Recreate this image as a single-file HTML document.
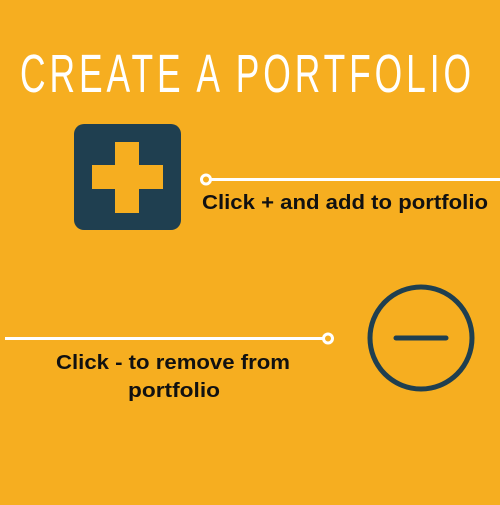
<!DOCTYPE html>
<html><head><style>
html,body{margin:0;padding:0;}
body{width:500px;height:500px;background:#F6AE20;overflow:hidden;}
</style></head><body>
<svg width="500" height="500" viewBox="0 0 500 500" xmlns="http://www.w3.org/2000/svg">
<rect width="500" height="500" fill="#F6AE20"/>
<text x="20" y="92" font-family="Liberation Sans, sans-serif" font-size="54" fill="#fff" textLength="455" lengthAdjust="spacingAndGlyphs" transform="translate(0,0)" style="letter-spacing:6px">CREATE A PORTFOLIO</text>
<rect x="74" y="124" width="107" height="106" rx="10" fill="#1F3F50"/>
<rect x="92" y="165" width="71" height="24" fill="#F6AE20"/>
<rect x="115" y="142" width="24" height="71" fill="#F6AE20"/>
<line x1="211" y1="179.5" x2="500" y2="179.5" stroke="#fff" stroke-width="3"/>
<circle cx="206" cy="179.5" r="4.5" fill="none" stroke="#fff" stroke-width="3"/>
<text x="202" y="209" font-family="Liberation Sans, sans-serif" font-weight="bold" font-size="20" fill="#111" textLength="286" lengthAdjust="spacingAndGlyphs">Click + and add to portfolio</text>
<line x1="5" y1="338.5" x2="323" y2="338.5" stroke="#fff" stroke-width="3"/>
<circle cx="328" cy="338.5" r="4.5" fill="none" stroke="#fff" stroke-width="3"/>
<text x="56" y="369" font-family="Liberation Sans, sans-serif" font-weight="bold" font-size="20" fill="#111" textLength="234" lengthAdjust="spacingAndGlyphs">Click - to remove from</text>
<text x="128" y="397" font-family="Liberation Sans, sans-serif" font-weight="bold" font-size="20" fill="#111" textLength="92" lengthAdjust="spacingAndGlyphs">portfolio</text>
<circle cx="421" cy="338" r="51" fill="none" stroke="#1F3F50" stroke-width="5"/>
<line x1="396" y1="338" x2="446" y2="338" stroke="#1F3F50" stroke-width="5" stroke-linecap="round"/>
</svg>
</body></html>
